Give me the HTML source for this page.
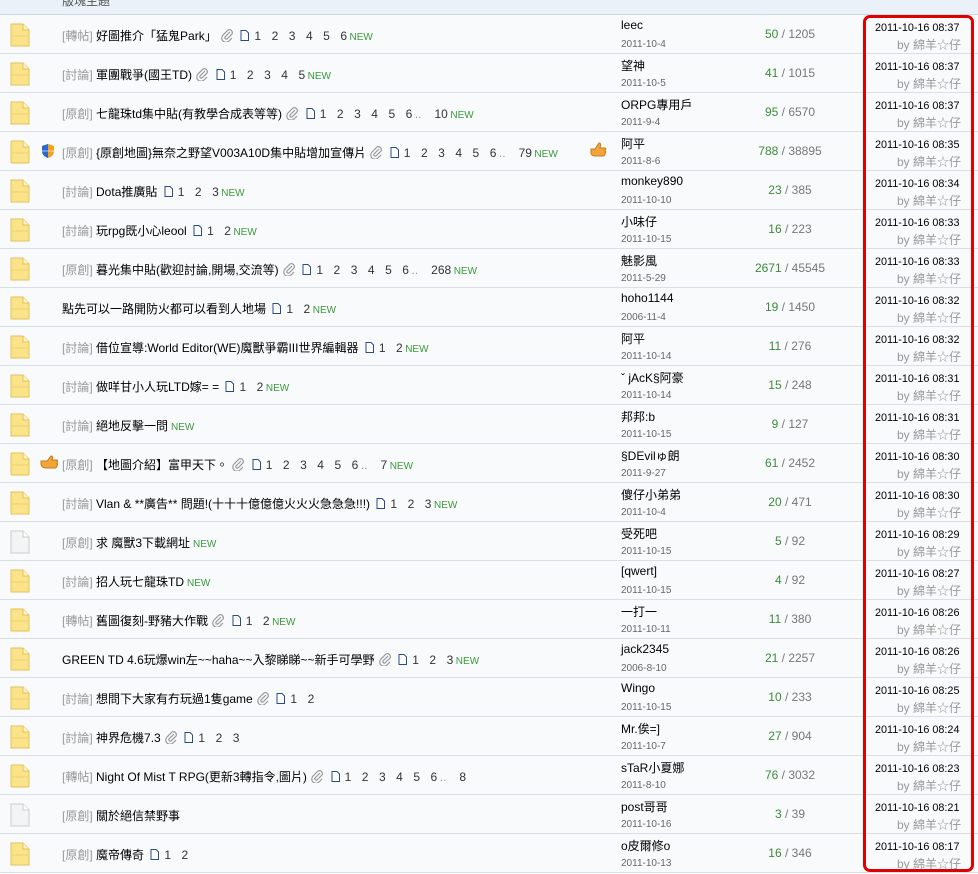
<!DOCTYPE html>
<html><head><meta charset="utf-8">
<style>
*{margin:0;padding:0;box-sizing:border-box}
body{width:978px;height:874px;overflow:hidden;background:#fff;font-family:"Liberation Sans","Noto Sans CJK TC",sans-serif;font-size:12px;color:#000;position:relative}
.hdr{position:absolute;left:0;top:0;width:978px;height:15px;background:#eaf1f8;border-bottom:1px solid #cfd8e2;overflow:hidden}
.hdr span{position:absolute;left:62px;top:-8px;color:#555;font-size:12px}
.row{position:absolute;left:0;width:978px;height:39px;background:#f8fafc;border-bottom:1px solid #d9dfe6}
.ic{position:absolute;left:10px;top:8px}
.mk{position:absolute;left:40px;top:11px}
.t{position:absolute;left:62px;top:12px;white-space:nowrap;font-size:12px}
.tag{color:#999}
.pg{color:#333;margin-left:3px}
.pg b{font-weight:normal;margin-right:10.5px}
.nw{color:#3a9a3a;font-size:10px}
.au{position:absolute;left:621px;top:3px;white-space:nowrap}
.ad{position:absolute;left:621px;top:24px;color:#666;font-size:10px}
.ct{position:absolute;left:700px;width:180px;text-align:center;top:12px;color:#777;font-size:12px}
.ct em{font-style:normal;color:#3a8a3a}
.ld{position:absolute;left:875px;top:7px;font-size:10.8px;color:#000}
.lb{position:absolute;right:17px;top:21px;color:#999;font-size:12px}
.red{position:absolute;left:863px;top:15px;width:111px;height:857px;border:3px solid #e00000;border-radius:7px}
</style></head><body>
<div class="hdr"><span>版塊主題</span></div>
<svg width="0" height="0" style="position:absolute">
<defs>
<symbol id="fy" viewBox="0 0 20 24"><path d="M1 1h12l6 6v16H1z" fill="#fbe38a" stroke="#e3c15a"/><path d="M13 1v6h6" fill="#fff4c8" stroke="#e3c15a"/><path d="M2 13h16" stroke="#f0cf6a"/></symbol>
<symbol id="fg" viewBox="0 0 20 24"><path d="M1 1h12l6 6v16H1z" fill="#f4f4f4" stroke="#ccc"/><path d="M13 1v6h6" fill="#fff" stroke="#ccc"/></symbol>
<symbol id="clip" viewBox="0 0 14 14"><path d="M10 4L5 9a1.5 1.5 0 0 0 2 2l5-5a3 3 0 0 0-4-4L3 7a4 4 0 0 0 6 6l3-3" fill="none" stroke="#999" stroke-width="1.2"/></symbol>
<symbol id="doc" viewBox="0 0 9 11"><path d="M1 .5h5l2.5 2.5v7.5H1z" fill="#fff" stroke="#2a4a8a"/></symbol>
</defs></svg>
<div id="rows"></div>
<div class="red"></div>
<script>
var R=[
["fy","","[轉帖] ","好圖推介「猛鬼Park」",1,[1,2,3,4,5,6],1,"leec","2011-10-4","50","1205","08:37"],
["fy","","[討論] ","軍團戰爭(國王TD)",1,[1,2,3,4,5],1,"望神","2011-10-5","41","1015","08:37"],
["fy","","[原創] ","七龍珠td集中貼(有教學合成表等等)",1,[1,2,3,4,5,6,"..",10],1,"ORPG專用戶","2011-9-4","95","6570","08:37"],
["fy","s","[原創] ","{原創地圖}無奈之野望V003A10D集中貼增加宣傳片",1,[1,2,3,4,5,6,"..",79],1,"阿平","2011-8-6","788","38895","08:35","t"],
["fy","","[討論] ","Dota推廣貼",0,[1,2,3],1,"monkey890","2011-10-10","23","385","08:34"],
["fy","","[討論] ","玩rpg既小心leool",0,[1,2],1,"小味仔","2011-10-15","16","223","08:33"],
["fy","","[原創] ","暮光集中貼(歡迎討論,開場,交流等)",1,[1,2,3,4,5,6,"..",268],1,"魅影風","2011-5-29","2671","45545","08:33"],
["fy","","","點先可以一路開防火都可以看到人地場",0,[1,2],1,"hoho1144","2006-11-4","19","1450","08:32"],
["fy","","[討論] ","借位宣導:World Editor(WE)魔獸爭霸III世界編輯器",0,[1,2],1,"阿平","2011-10-14","11","276","08:32"],
["fy","","[討論] ","做咩甘小人玩LTD嫁= =",0,[1,2],1,"ˇ jAcK§阿豪","2011-10-14","15","248","08:31"],
["fy","","[討論] ","絕地反擊一問",0,[],1,"邦邦:b","2011-10-15","9","127","08:31"],
["fy","h","[原創] ","【地圖介紹】富甲天下。",1,[1,2,3,4,5,6,"..",7],1,"§DEvilゅ朗","2011-9-27","61","2452","08:30"],
["fy","","[討論] ","Vlan & **廣告** 問題!(十十十億億億火火火急急急!!!)",0,[1,2,3],1,"傻仔小弟弟","2011-10-4","20","471","08:30"],
["fg","","[原創] ","求 魔獸3下載網址",0,[],1,"受死吧","2011-10-15","5","92","08:29"],
["fy","","[討論] ","招人玩七龍珠TD",0,[],1,"[qwert]","2011-10-15","4","92","08:27"],
["fy","","[轉帖] ","舊圖復刻-野豬大作戰",1,[1,2],1,"一打一","2011-10-11","11","380","08:26"],
["fy","","","GREEN TD 4.6玩爆win左~~haha~~入黎睇睇~~新手可學野",1,[1,2,3],1,"jack2345","2006-8-10","21","2257","08:26"],
["fy","","[討論] ","想問下大家有冇玩過1隻game",1,[1,2],0,"Wingo","2011-10-15","10","233","08:25"],
["fy","","[討論] ","神界危機7.3",1,[1,2,3],0,"Mr.俟=]","2011-10-7","27","904","08:24"],
["fy","","[轉帖] ","Night Of Mist T RPG(更新3轉指令,圖片)",1,[1,2,3,4,5,6,"..",8],0,"sTaR小夏娜","2011-8-10","76","3032","08:23"],
["fg","","[原創] ","關於絕信禁野事",0,[],0,"post哥哥","2011-10-16","3","39","08:21"],
["fy","","[原創] ","魔帝傳奇",0,[1,2],0,"o皮爾修o","2011-10-13","16","346","08:17"]
];
var h="";
R.forEach(function(r,i){
 var top=15+i*39;
 var mk="";
 if(r[1]=="s")mk='<svg class="mk" width="16" height="16" viewBox="0 0 16 16"><path d="M8 1l6 2v5c0 4-3 6-6 7-3-1-6-3-6-7V3z" fill="#f0a020"/><path d="M8 1v14c-3-1-6-3-6-7V3z" fill="#2a6ad0"/><path d="M2 8h12" stroke="#fff" stroke-width=".6"/></svg>';
 if(r[1]=="h")mk='<svg class="mk" width="18" height="14" viewBox="0 0 18 14"><path d="M1 6h6l4-5c2 0 2 2 1 4h5c1 0 1 2 0 2v1c1 0 1 2 0 2v1c0 1-1 2-2 2H5c-2 0-4-2-4-4z" fill="#f2a53a" stroke="#c97a1a"/></svg>';
 var pg="";
 if(r[4])pg+=' <svg width="14" height="14" style="vertical-align:-2px"><use href="#clip"/></svg>';
 if(r[5].length){pg+=' <span class="pg"><svg width="9" height="11" style="vertical-align:-1px;margin-right:5px"><use href="#doc"/></svg>';
  r[5].forEach(function(p){pg+= p==".." ? '<b style="color:#999;margin-left:-8px;margin-right:13px">..</b>' : '<b>'+p+'</b>';});
  pg+='</span>';}
 var nw=r[6]?'<span class="nw" style="margin-left:'+(r[5].length?'-8px':'3px')+'">NEW</span>':'';
 var th=r[12]?'<svg style="position:absolute;left:589px;top:10px" width="18" height="16" viewBox="0 0 18 16"><path d="M2 7h4l4-6c2 0 2 2 1 5h5c1 0 1 2 0 2v1c1 0 1 2 0 2v1c0 1-1 2-2 2H6c-2 0-4-1-4-3z" fill="#f2a53a" stroke="#c97a1a"/></svg>':'';
 h+='<div class="row" style="top:'+top+'px"><svg class="ic" width="20" height="24"><use href="#'+r[0]+'"/></svg>'+mk+
 '<div class="t"><span class="tag">'+r[2]+'</span>'+r[3]+pg+nw+'</div>'+th+
 '<div class="au">'+r[7]+'</div><div class="ad">'+r[8]+'</div>'+
 '<div class="ct"><em>'+r[9]+'</em> / '+r[10]+'</div>'+
 '<div class="ld">2011-10-16 '+r[11]+'</div><div class="lb">by 綿羊☆仔</div></div>';
});
document.getElementById("rows").innerHTML=h;
</script>
</body></html>
